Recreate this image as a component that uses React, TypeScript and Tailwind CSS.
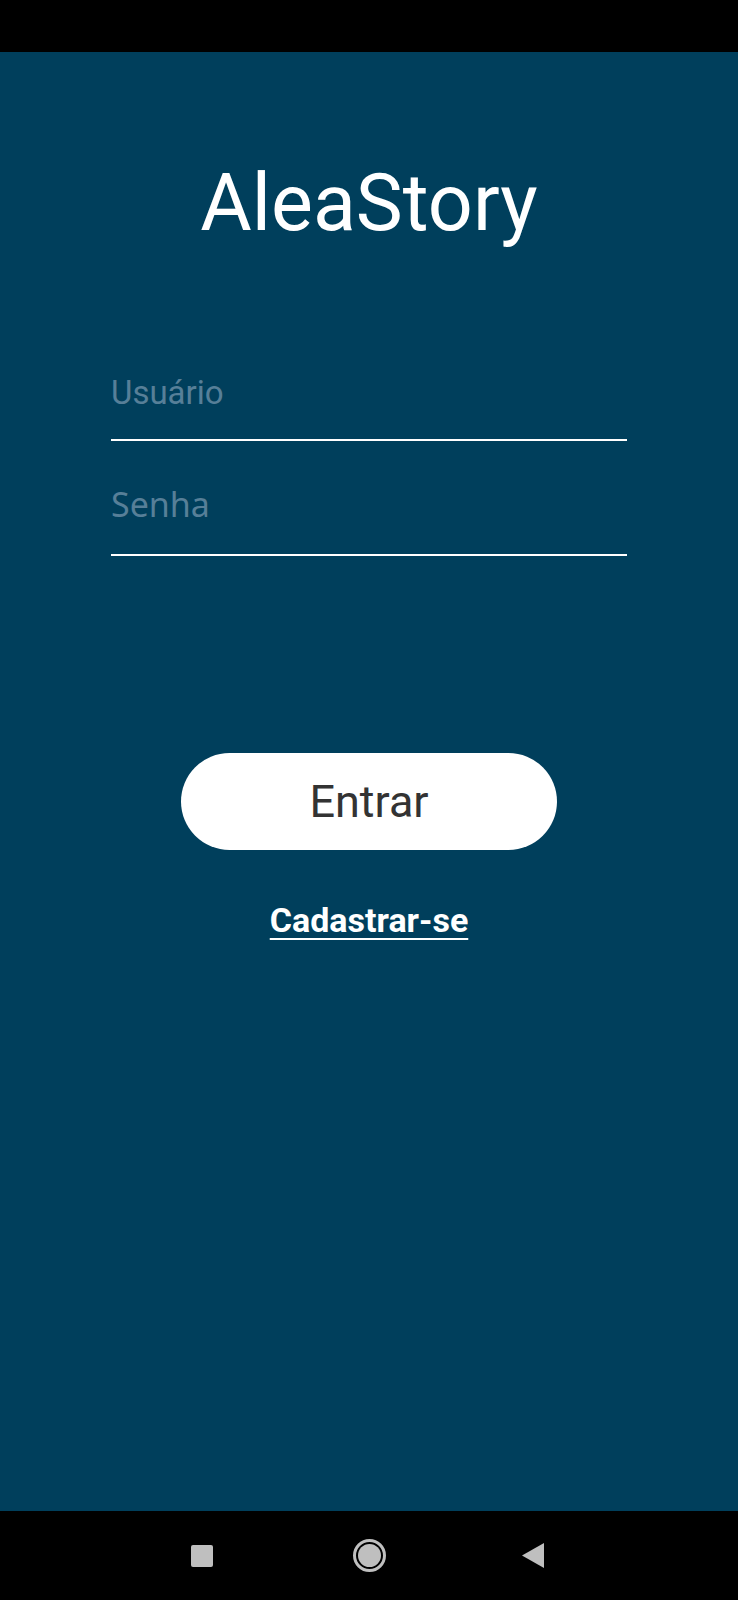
import React from "react";

export default function App() {
  return (
    <div className="w-[738px] h-[1600px] flex flex-col bg-black">
      <div className="h-[52px] bg-black shrink-0" />
      <div className="flex-1 bg-[#003f5c] flex flex-col items-center">
        <h1 className="mt-[112px] text-[79px] leading-none text-white font-['Roboto',sans-serif] font-normal h-[79px]">
          AleaStory
        </h1>
        <div className="mt-[133px] w-[516px] flex flex-col">
          <div className="border-b-2 border-white pb-[30px]">
            <span className="block text-[33px] leading-none h-[33px] text-[#577f98] font-['Roboto',sans-serif]">
              Usuário
            </span>
          </div>
          <div className="mt-[46px] border-b-2 border-white pb-[33px]">
            <span className="block text-[34px] leading-none h-[34px] text-[#577f98] font-['Noto_Sans',sans-serif]">
              Senha
            </span>
          </div>
        </div>
        <button className="mt-[197px] w-[376px] h-[97px] rounded-full bg-white flex items-center justify-center">
          <span className="text-[45px] leading-none text-[#333333] font-['Roboto',sans-serif]">Entrar</span>
        </button>
        <a className="mt-[53px] text-[34px] leading-none font-bold text-white underline decoration-2 underline-offset-[6px] font-['Roboto',sans-serif]">
          Cadastrar-se
        </a>
      </div>
      <div className="h-[89px] bg-black shrink-0 flex items-center">
        <div className="w-[738px] flex items-center">
          <div className="ml-[191px] w-[22px] h-[22px] bg-[#bfbfbf] rounded-[2px]" />
          <div className="ml-[140px] w-[33px] h-[33px] rounded-full border-[3px] border-[#bfbfbf] flex items-center justify-center">
            <div className="w-[23px] h-[23px] rounded-full bg-[#bfbfbf]" />
          </div>
          <svg className="ml-[136px]" width="22" height="25" viewBox="0 0 22 25">
            <polygon points="22,0 22,25 0,12.5" fill="#bfbfbf" />
          </svg>
        </div>
      </div>
    </div>
  );
}
